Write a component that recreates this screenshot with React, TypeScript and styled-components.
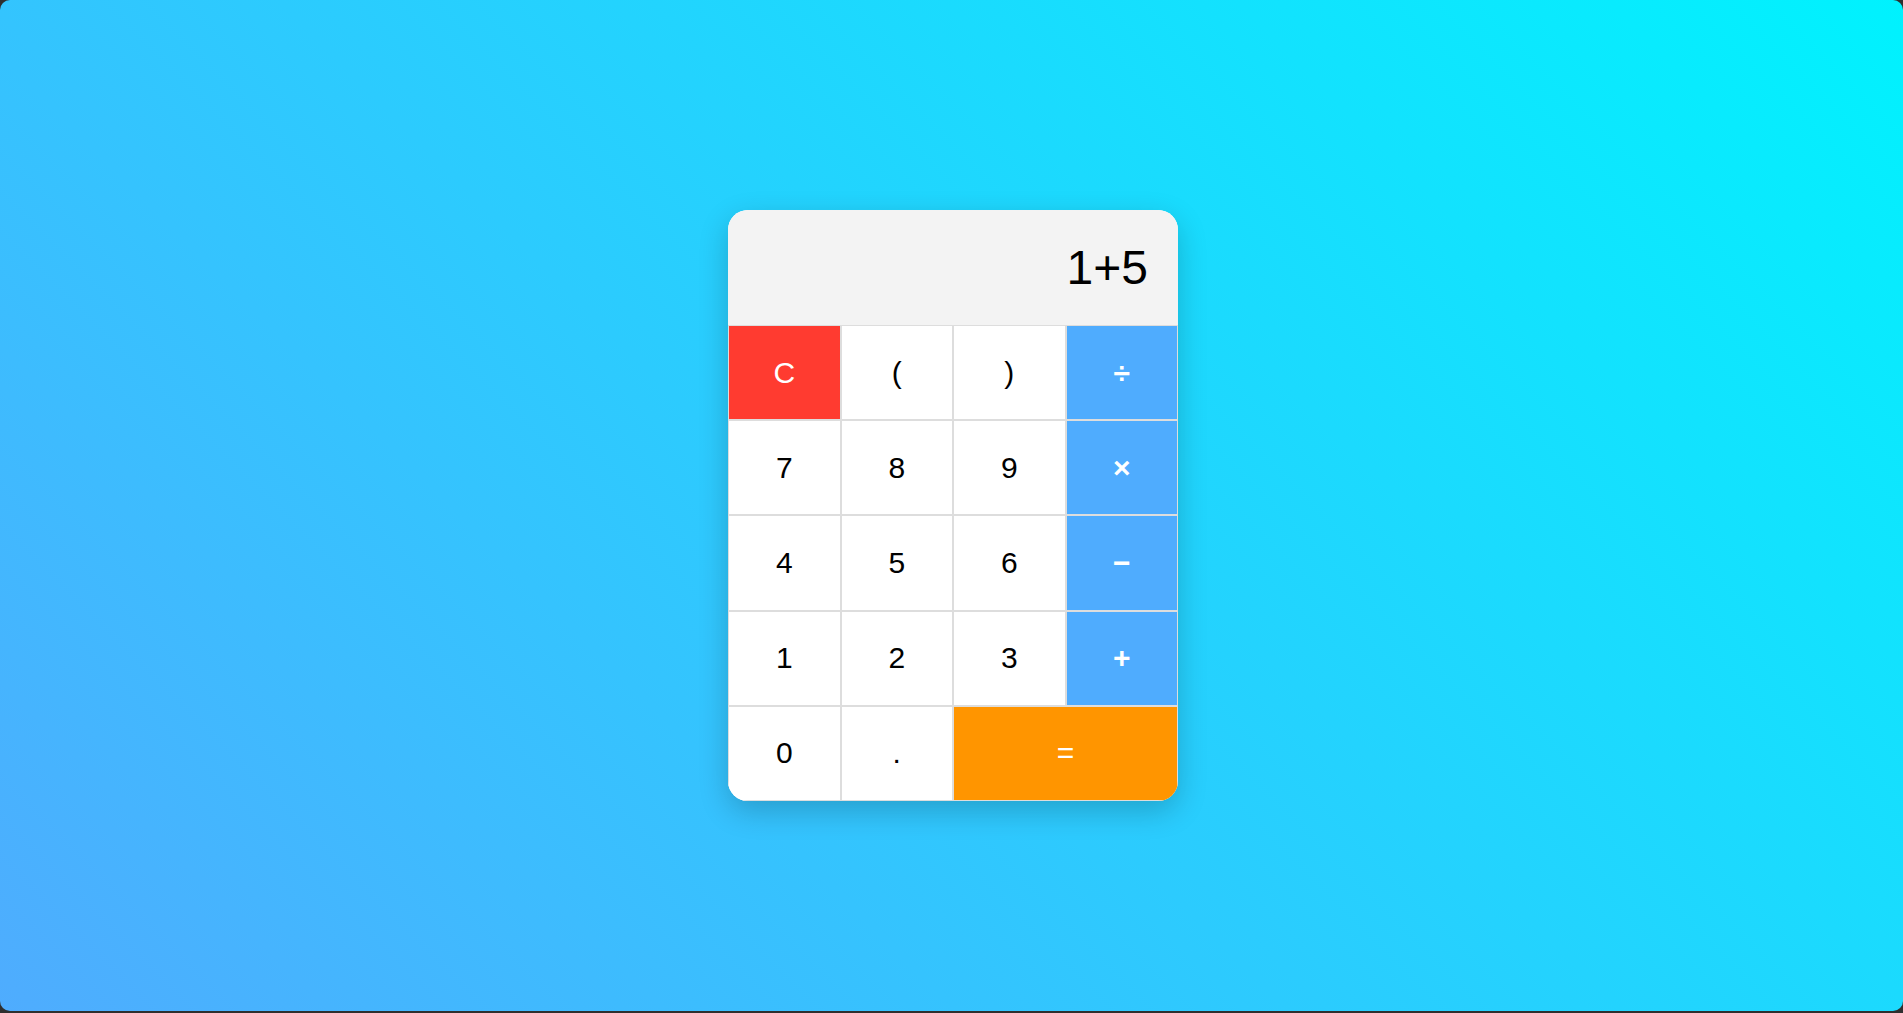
import React from "react";
import styled, { createGlobalStyle } from "styled-components";

const GlobalStyle = createGlobalStyle`
  html, body {
    margin: 0;
    padding: 0;
    background: #2f2f2f;
    font-family: "Liberation Sans", Arial, sans-serif;
  }
  * { box-sizing: border-box; }
`;

const Page = styled.div`
  height: 1011px;
  width: 100%;
  border-radius: 10px;
  background: linear-gradient(45deg, #4facfe 0%, #00f2fe 100%);
  display: flex;
  align-items: center;
  justify-content: center;
`;

const Card = styled.div`
  width: 450px;
  margin-left: 3px;
  background: #ffffff;
  border-radius: 20px;
  overflow: hidden;
  box-shadow: 0 10px 30px rgba(0, 0, 0, 0.2);
`;

const Display = styled.div`
  background: #f3f3f3;
  padding: 30px;
  height: 115px;
  text-align: right;
  font-size: 48px;
  line-height: 55px;
  color: #000;
`;

const Keys = styled.div`
  display: grid;
  grid-template-columns: repeat(4, 1fr);
  grid-auto-rows: 95.2px;
`;

type Variant = "num" | "clear" | "op" | "equals";

const bg: Record<Variant, string> = {
  num: "#ffffff",
  clear: "#ff3b30",
  op: "#4facfe",
  equals: "#ff9500",
};

const Key = styled.button<{ $variant: Variant; $span?: number }>`
  grid-column: span ${(p) => p.$span ?? 1};
  border: 1px solid #dddddd;
  margin: 0;
  padding: 0;
  background: ${(p) => bg[p.$variant]};
  color: ${(p) => (p.$variant === "num" ? "#000000" : "#ffffff")};
  font-family: "Liberation Sans", Arial, sans-serif;
  font-size: 30px;
  font-weight: ${(p) => (p.$variant === "op" ? 600 : 400)};
  line-height: 1;
  display: flex;
  align-items: center;
  justify-content: center;
  cursor: pointer;
`;

const keys: { label: string; variant: Variant; span?: number }[] = [
  { label: "C", variant: "clear" },
  { label: "(", variant: "num" },
  { label: ")", variant: "num" },
  { label: "÷", variant: "op" },
  { label: "7", variant: "num" },
  { label: "8", variant: "num" },
  { label: "9", variant: "num" },
  { label: "×", variant: "op" },
  { label: "4", variant: "num" },
  { label: "5", variant: "num" },
  { label: "6", variant: "num" },
  { label: "−", variant: "op" },
  { label: "1", variant: "num" },
  { label: "2", variant: "num" },
  { label: "3", variant: "num" },
  { label: "+", variant: "op" },
  { label: "0", variant: "num" },
  { label: ".", variant: "num" },
  { label: "=", variant: "equals", span: 2 },
];

export default function App() {
  return (
    <>
      <GlobalStyle />
      <Page>
        <Card>
          <Display>1+5</Display>
          <Keys>
            {keys.map((k, i) => (
              <Key key={i} $variant={k.variant} $span={k.span}>
                {k.label}
              </Key>
            ))}
          </Keys>
        </Card>
      </Page>
    </>
  );
}
